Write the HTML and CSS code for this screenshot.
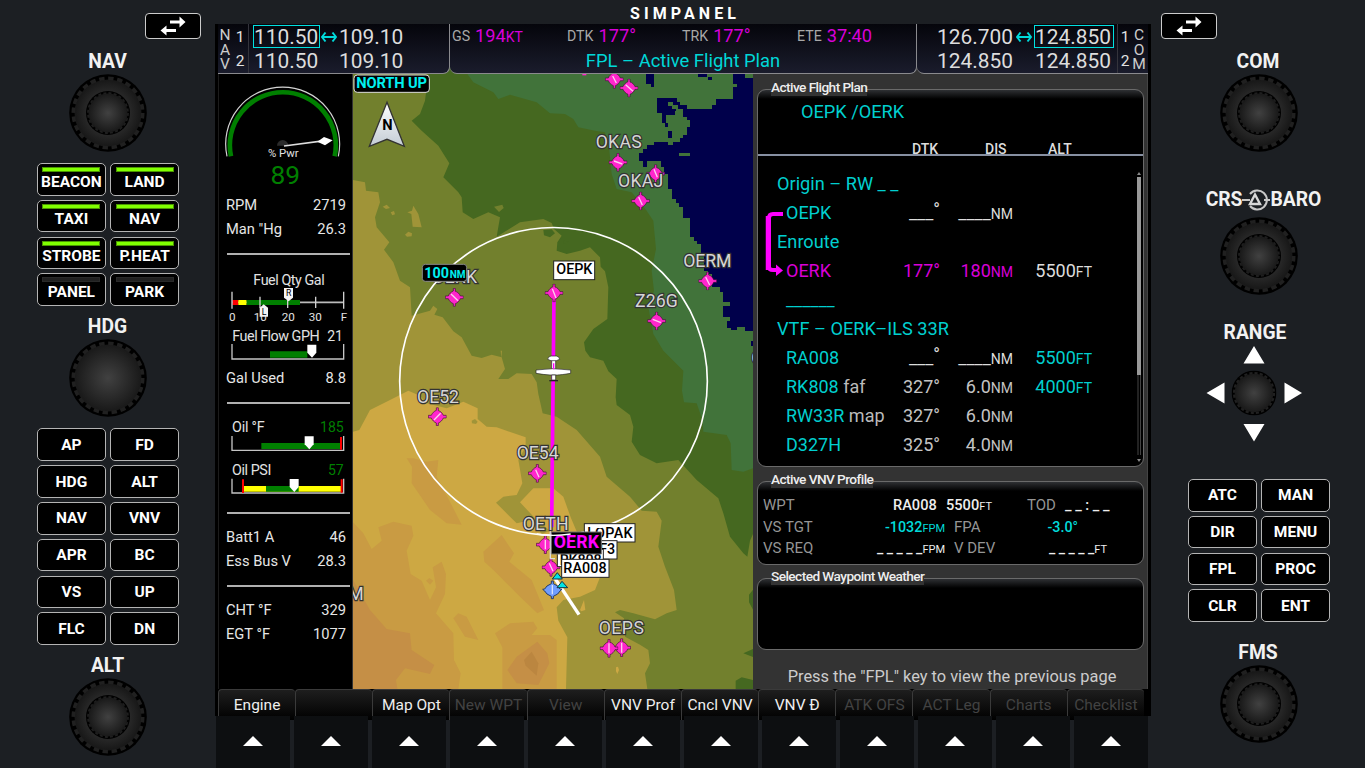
FILE: index.html
```html
<!DOCTYPE html>
<html lang="en">
<head>
<meta charset="utf-8">
<title>SimPanel</title>
<link rel="stylesheet" href="styles.css">
</head>
<body>
<svg class="defs" width="0" height="0" aria-hidden="true">
  <defs>
    <radialGradient id="cap"><stop offset="0" stop-color="#414141"/><stop offset="1" stop-color="#191919"/></radialGradient>
    <radialGradient id="ring"><stop offset="0" stop-color="#333"/><stop offset="0.6" stop-color="#2a2a2a"/><stop offset="1" stop-color="#171717"/></radialGradient>
    <linearGradient id="silver" x1="0" y1="0" x2="0" y2="1"><stop offset="0" stop-color="#fff"/><stop offset="1" stop-color="#c3ccd4"/></linearGradient>
    <symbol id="knob-single" viewBox="0 0 78 78">
      <circle cx="39" cy="39" r="38.8" fill="#000"/>
      <circle cx="39" cy="39" r="33.5" fill="url(#cap)"/>
      <circle cx="39" cy="39" r="34.7" fill="none" stroke="#202020" stroke-width="3.6" stroke-dasharray="5.4 3.68"/>
    </symbol>
    <symbol id="knob-dual" viewBox="0 0 78 78">
      <circle cx="39" cy="39" r="38.8" fill="#000"/>
      <circle cx="39" cy="39" r="33.5" fill="url(#ring)"/>
      <circle cx="39" cy="39" r="34.7" fill="none" stroke="#202020" stroke-width="3.6" stroke-dasharray="5.4 3.68"/>
      <circle cx="39" cy="39" r="22" fill="#000"/>
      <circle cx="39" cy="39" r="19.5" fill="url(#cap)"/>
      <circle cx="39" cy="39" r="20" fill="none" stroke="#1e1e1e" stroke-width="1.8" stroke-dasharray="3 2.23"/>
    </symbol>
    <symbol id="swap" viewBox="0 0 26 20">
      <path d="M10 4.500h9.500V0.500l6 5.500-6 5.500V7.500H10z M16 13H6.500V9.500l-6 5 6 5V16H16z" fill="#fff"/>
    </symbol>
    <symbol id="apt" viewBox="-28 -28 56 56">
      <path d="M-3-27h6v9C9-17 16-10 18-4h9v8h-9C16 10 9 17 3 19v8h-6v-8C-9 17-16 10-18 4h-9v-8h9C-16-10-9-17-3-19z" fill="#ff26cc" stroke="#3c1434" stroke-width="2"/>
    </symbol>
  </defs>
</svg>

<aside class="bezel">
  <button class="swap swap-left"><svg width="26" height="20"><use href="#swap"/></svg></button>
  <div class="label l-nav">NAV</div>
  <svg class="knob"><use href="#knob-dual"/></svg>
  <div class="keys">
    <button class="key lit"><i class="led on"></i>BEACON</button><button class="key lit"><i class="led on"></i>LAND</button>
    <button class="key lit"><i class="led on"></i>TAXI</button><button class="key lit"><i class="led on"></i>NAV</button>
    <button class="key lit"><i class="led on"></i>STROBE</button><button class="key lit"><i class="led on"></i>P.HEAT</button>
    <button class="key lit"><i class="led"></i>PANEL</button><button class="key lit"><i class="led"></i>PARK</button>
  </div>
  <div class="label l-hdg">HDG</div>
  <svg class="knob"><use href="#knob-single"/></svg>
  <div class="keys ap-keys">
    <button class="key">AP</button><button class="key">FD</button>
    <button class="key">HDG</button><button class="key">ALT</button>
    <button class="key">NAV</button><button class="key">VNV</button>
    <button class="key">APR</button><button class="key">BC</button>
    <button class="key">VS</button><button class="key">UP</button>
    <button class="key">FLC</button><button class="key">DN</button>
  </div>
  <div class="label l-hdg">ALT</div>
  <svg class="knob"><use href="#knob-dual"/></svg>
</aside>

<main class="center">
  <h1 class="brand">SIMPANEL</h1>
  <section class="screen">
    <header class="top">
      <div class="bay nav-bay">
        <div class="vert"><span>N</span><span>A</span><span>V</span></div>
        <div class="nums"><span>1</span><span>2</span></div>
        <div class="freqs">
          <span class="boxed">110.50</span><svg class="dbl" viewBox="0 0 16 12"><path d="M4.500 1.500 1 6l3.500 4.500M11.500 1.500 15 6l-3.500 4.500M1 6h14" /></svg><span>109.10</span>
          <span>110.50</span><i></i><span>109.10</span>
        </div>
      </div>
      <div class="bay mid-bay">
        <div class="data">
          <div><small>GS</small><b>194<sub>KT</sub></b></div>
          <div><small>DTK</small><b>177°</b></div>
          <div><small>TRK</small><b>177°</b></div>
          <div><small>ETE</small><b>37:40</b></div>
        </div>
        <div class="page">FPL – Active Flight Plan</div>
      </div>
      <div class="bay com-bay">
        <div class="freqs">
          <span>126.700</span><svg class="dbl" viewBox="0 0 16 12"><path d="M4.500 1.500 1 6l3.500 4.500M11.500 1.500 15 6l-3.500 4.500M1 6h14" /></svg><span class="boxed">124.850</span>
          <span>124.850</span><i></i><span>124.850</span>
        </div>
        <div class="nums"><span>1</span><span>2</span></div>
        <div class="vert"><span>C</span><span>O</span><span>M</span></div>
      </div>
    </header>

    <div class="work">
      <section class="eis">
        <svg class="g-pwr" viewBox="9 0 405 357">
          <path d="M36 247A171 171 0 1 1 370 247" fill="none" stroke="#d4d4d4" stroke-width="3.500"/>
          <path d="M48 247A159 159 0 1 1 359 247" fill="none" stroke="#007f00" stroke-width="14"/>
          <path d="M186 215a17 17 0 0 1 34 0z" fill="#2b2b2b"/>
          <path d="M207 216 330 200" stroke="#ddd" stroke-width="5"/>
          <path d="M307 203 327 189 353 199 330 214z" fill="#fff"/>
          <text x="205" y="250" class="t" font-size="34" text-anchor="middle">% Pwr</text>
          <text x="211" y="331" class="g" font-size="79" text-anchor="middle">89</text>
        </svg>
        <div class="row"><span>RPM</span><span>2719</span></div>
        <div class="row"><span>Man "Hg</span><span>26.3</span></div>
        <hr class="a">
        <svg class="g-fuel" viewBox="9 543 405 333">
          <text x="222" y="632" class="t" font-size="43" text-anchor="middle" textLength="214">Fuel Qty Gal</text>
          <path d="M52 685H386" stroke="#bbb" stroke-width="5"/>
          <path d="M52 678h18v15H52z" fill="#f00"/><path d="M70 678h25v15H70z" fill="#ff0"/><path d="M95 678h160v15H95z" fill="#007f00"/>
          <path d="M51 653v51M135 668v34M218 668v34M302 668v34M386 653v51" stroke="#d0d0d0" stroke-width="4"/>
          <g class="t" font-size="35" text-anchor="middle"><text x="52" y="740">0</text><text x="136" y="740">10</text><text x="220" y="740">20</text><text x="301" y="740">30</text><text x="387" y="740">F</text></g>
          <path d="M207 642h27v29l-13 11-14-11z" fill="#f4f4f4"/><text x="221" y="667" font-size="26" text-anchor="middle" class="k">R</text>
          <path d="M134 728v-27l12-10 13 10v27z" fill="#f4f4f4"/><text x="147" y="724" font-size="26" text-anchor="middle" class="k">L</text>
          <text x="52" y="801" class="t" font-size="43" textLength="262">Fuel Flow GPH</text><text x="384" y="801" class="t" font-size="42" text-anchor="end">21</text>
          <path d="M165 832h112v19H165z" fill="#007f00"/>
          <path d="M51 810v45H386v-45" fill="none" stroke="#c4c4c4" stroke-width="4"/>
          <path d="M277 812h27v24l-13 15-14-15z" fill="#fff"/>
        </svg>
        <div class="row"><span>Gal Used</span><span>8.8</span></div>
        <hr class="a">
        <svg class="g-oil" viewBox="9 72 405 324">
          <text x="51" y="157" class="t" font-size="43" textLength="98">Oil °F</text><text x="386" y="157" class="g" font-size="42" text-anchor="end">185</text>
          <path d="M139 189h238v18H139z" fill="#007f00"/>
          <path d="M51 168v43H386v-43" fill="none" stroke="#c4c4c4" stroke-width="4"/><path d="M378 171v38" stroke="#f00" stroke-width="6"/>
          <path d="M269 169h27v24l-13 15-14-15z" fill="#fff"/>
          <text x="51" y="285" class="t" font-size="43" textLength="118">Oil PSI</text><text x="386" y="285" class="g" font-size="42" text-anchor="end">57</text>
          <path d="M84 318h294v17H84z" fill="#ff0"/><path d="M153 318h98v17h-98z" fill="#007f00"/>
          <path d="M51 296v43H386v-43" fill="none" stroke="#c4c4c4" stroke-width="4"/><path d="M84 298v41M380 298v40" stroke="#f00" stroke-width="6"/>
          <path d="M224 297h27v24l-13 15-14-15z" fill="#fff"/>
        </svg>
        <hr>
        <div class="row first"><span>Batt1 A</span><span>46</span></div>
        <div class="row"><span>Ess Bus V</span><span>28.3</span></div>
        <hr class="a">
        <div class="row first"><span>CHT °F</span><span>329</span></div>
        <div class="row"><span>EGT °F</span><span>1077</span></div>
      </section>

      <svg class="map" viewBox="9 0 1200 1845">
        <path class="low" d="M9 0H1209V1845H9z"/>
        <path class="sea" shape-rendering="crispEdges" d="M1185 0V12H1209V770H1185V760H1162V768H1142V762H1130V740H1140V730H1120V695H1140V685H1120V655H1110V640H1085V600H1075V590H1062V545H1052V510H1042V500H1032V488H1020V432H1000V400H988V388H978V376H965V345H955V300H942V280H932V262H890V278H880V262H868V236H880V226H890V214H912V203H955V213H968V203H990V193H1000V183H1010V158H1020V138H1010V128H1000V118H988V112H975V122H948V148H955V158H945V148H935V118H922V72H980V84H990V94H1010V104H1085V94H1098V74H1150V40H1162V30H1150V0z"/>
        <path class="sea" shape-rendering="crispEdges" d="M955 170h12v22h-12zM1045 0h25v8h16v10h-12v-8h-29zM1203 802h6v14h-6zM888 0h24v40h-10v-10h-14z"/>
        <path class="low" shape-rendering="crispEdges" d="M988 236h32v10h-32zM955 84h14v10h16v10h14v12h-20v-10h-12v-10h-12z"/>
        <path class="dark" d="M352 0 370 25 430 55 445 75 480 62 560 85 600 118 645 120 670 135 685 160 735 170 765 175 778 230 785 300 800 345 845 355 890 410 910 440 918 525 905 590 912 650 895 700 910 780 940 830 1000 890 996 950 1002 985 1040 988 1058 1040 1060 1073 1130 1083 1142 1108 1145 1188 1180 1193 1209 1183V1845H9V0z"/>
        <path class="olive" d="M235 0 225 80 210 120 185 140 215 170 265 215 298 268 280 310 325 355 335 370 338 415 370 435 415 415 450 430 440 488 510 445 580 435 605 447 612 465 635 485 622 505 620 530 650 540 690 530 720 520 750 550 752 578 765 592 775 640 772 735 730 765 702 805 706 830 720 850 760 860 775 892 800 915 797 970 800 993 840 1023 850 1058 845 1103 870 1143 920 1168 985 1158 1040 1218 1105 1273 1120 1318 1140 1388 1180 1438 1192 1448 1200 1400 1209 1380V1845H9V0z"/>
        <path class="dark" d="M580 468l25-2 10 12-15 12-18-6zM640 500l15 2-6 9-10-5zM1197 1562l12-15v60l-12-22zM1180 1738l29-13v24zM1157 1820l18-10 34 8v27h-52z"/>
        <path class="olive" d="M432 398l25-6 4 10-14 12z"/>
        <path class="tan" d="M9 318 45 325 48 350 85 355 90 385 75 430 80 460 118 505 102 527 130 565 150 620 180 640 185 725 240 710 250 695 262 705 253 722 278 730 310 772 335 790 365 845 395 852 425 842 455 850 465 885 445 915 475 915 500 898 545 900 560 925 565 960 578 1018 620 1028 680 1068 750 1148 770 1208 840 1268 875 1310 920 1313 935 1340 925 1418 945 1478 972 1548 980 1608 950 1618 915 1636 850 1618 810 1608 795 1615 822 1633 825 1688 870 1712 895 1728 900 1768 885 1798 892 1845H9z"/>
        <path class="tan" d="M190 395 205 420 215 460 188 458 184 420 172 415 186 410zM165 482l10-9 11 5-1 9-14 1zM98 398l12-6 10 10-12 3zM122 415l10-4 3 10-8 3zM452 830l4 0-2 22z"/>
        <path class="gold" d="M9 1073 28 1068 60 1008 120 978 175 950 210 965 230 988 290 1003 340 983 383 1003 383 1035 410 1058 440 1060 527 1090 527 1118 505 1158 517 1228 500 1263 460 1268 438 1286 480 1328 500 1348 545 1338 575 1380 600 1370 560 1338 510 1285 550 1243 610 1243 640 1268 662 1330 700 1420 745 1478 750 1510 735 1548 690 1568 640 1578 620 1600 625 1640 652 1690 648 1845H9z"/>
        <path class="tan" d="M365 1040l10-5 8 8-5 7-12-2z"/>
        <path class="gold" d="M798 1780l6-2 3 10-5 12-4-8zM690 1608l12-30 4 30-12 4z"/>
        <path class="amber" d="M170 1153 190 1153 230 1163 265 1158 260 1208 292 1268 335 1352 290 1348 240 1308 185 1228 186 1178zM9 1345 40 1378 65 1425 95 1400 85 1360 130 1343 185 1355 190 1385 170 1430 182 1500 215 1520 240 1578 258 1540 248 1480 275 1463 288 1500 285 1560 258 1618 310 1678 312 1758 332 1798 325 1845H9zM400 1433 455 1383 492 1438 478 1463 545 1518 582 1608 562 1618 520 1578 460 1518 430 1488 403 1463zM325 1618 350 1628 385 1698 345 1688 310 1633zM435 1678 480 1648 550 1643 562 1663 545 1683 600 1683 620 1698V1845H457V1720zM228 1520l10-8 12 8-10 12z"/>
        <path class="brown" d="M9 1518 60 1608 110 1665 180 1678 185 1728 253 1773 240 1800 165 1783 138 1818 142 1845H9zM472 1788 500 1748 562 1703 592 1738 598 1768 565 1833 500 1828z"/>
        <path class="core" d="M522 1758 545 1733 565 1768 560 1805 527 1775z"/>

        <path d="M612 658 605 1360" stroke="#f0f" stroke-width="11" fill="none"/>
        <path d="M613 1510 687 1622" stroke="#fff" stroke-width="10"/>
        <g>
          <use href="#apt" x="765" y="-12" width="56" height="56"/><use href="#apt" x="809" y="14" width="56" height="56"/>
          <use href="#apt" x="776" y="237" width="56" height="56"/><use href="#apt" x="889" y="271" width="56" height="56"/>
          <use href="#apt" x="844" y="353" width="56" height="56"/><use href="#apt" x="1045" y="593" width="56" height="56"/>
          <use href="#apt" x="892" y="713" width="56" height="56"/><use href="#apt" x="285" y="642" width="56" height="56"/>
          <use href="#apt" x="584" y="629" width="56" height="56"/><use href="#apt" x="234" y="1000" width="56" height="56"/>
          <use href="#apt" x="534" y="1170" width="56" height="56"/><use href="#apt" x="558" y="1384" width="56" height="56"/>
          <use href="#apt" x="575" y="1452" width="56" height="56"/><use href="#apt" x="787" y="1693" width="56" height="56"/><use href="#apt" x="749" y="1695" width="56" height="56"/>
          <path d="M697 0h12v4h-12z" fill="#ff26cc"/>
          <path d="M788 6 799 27M827 32 849 52M792 261 817 270M912 286 922 310M866 369 877 393M1067 609 1079 633M908 736 933 746M303 660 324 680M607 644 618 672M252 1038 272 1018M557 1187 567 1210M586 1398V1426M598 1468 609 1492M815 1706V1736M777 1708V1738" stroke="#fbd0ee" stroke-width="4"/>
        </g>
        <g class="place">
          <text x="806" y="222" textLength="138">OKAS</text><text x="872" y="339" textLength="136">OKAJ</text>
          <text x="1072" y="579" textLength="144">OERM</text><text x="919" y="700" textLength="128">Z26G</text>
          <text x="314" y="628" textLength="134">OERK</text><text x="264" y="988" textLength="126">OE52</text>
          <text x="563" y="1156" textLength="126">OE54</text><text x="587" y="1369" textLength="138">OETH</text>
          <text x="814" y="1680" textLength="136">OEPS</text><text x="18" y="1579">M</text><text x="1222" y="869">O</text>
        </g>
        <circle cx="610.500" cy="922" r="461.500" fill="none" stroke="#fff" stroke-width="5"/>
        <path d="M604 1521h6v8q16 6 20 16l6 1-6 5q-4 10-20 16v7h-6v-7q-16-6-20-16l-6-5 6-1q4-10 20-16z" fill="#6f9dff" stroke="#263c66" stroke-width="3"/><path d="M607 1533v28" stroke="#d5e2ff" stroke-width="4"/>
        <path d="M607 1515 622 1496 637 1515zM621 1541 636 1522 653 1541z" fill="#00e4e4" stroke="#134" stroke-width="3"/>

        <g class="tag">
          <rect x="703" y="1349" width="152" height="55"/><text x="780" y="1391" textLength="136">LOPAK</text>
          <path d="M735 1362 748 1352 760 1362z" fill="#fff"/>
          <rect x="640" y="1400" width="161" height="55"/><text x="757" y="1440">OF3</text>
          <rect x="622" y="1426" width="138" height="52"/><text x="692" y="1473" textLength="126">RK808</text>
          <rect x="635" y="1456" width="142" height="54"/><text x="705" y="1496" textLength="130">RA008</text>
          <rect x="611" y="561" width="123" height="56"/><text x="673" y="601" textLength="108">OEPK</text>
        </g>
        <path d="M601 1372v82h14" fill="none" stroke="#ddd" stroke-width="4"/>
        <path d="M604 1374h150v66H604z" fill="#000" stroke="#777" stroke-width="3"/>
        <text x="679" y="1423" class="active" text-anchor="middle" textLength="136">OERK</text>
        <path d="M560 1380Q610 1388 662 1380" fill="none" stroke="#fff" stroke-width="4"/>

        <g fill="#fff" stroke="#222" stroke-width="2"><path d="M605 856h12v34h-12z"/><path d="M593 856q0-8 10-10h16q10 2 10 10l-10 4h-16z"/><path d="M558 888q50-8 104 0v10q-30 5-40 5h-22q-20-1-42-5z"/><path d="M605 903h12v15h-12z"/></g>
        <path d="M611 868v18" stroke="#f0f" stroke-width="4"/><path d="M598 920h26" stroke="#222" stroke-width="4"/>

        <rect x="12" y="3" width="226" height="52" rx="10" fill="#000" stroke="#ddd" stroke-width="3"/>
        <text x="125" y="43" class="cy" font-size="44" text-anchor="middle" textLength="212">NORTH UP</text>
        <path d="M111 85 163 217 111 196 58 217z" fill="url(#silver)" stroke="#333" stroke-width="4"/>
        <text x="112" y="168" class="k n" font-size="44" text-anchor="middle">N</text>
        <rect x="217" y="571" width="133" height="51" rx="9" fill="#000" stroke="#888" stroke-width="3"/>
        <text x="223" y="612" class="cy" font-size="43">100<tspan font-size="30" dx="2">NM</tspan></text>
      </svg>

      <section class="side">
        <div class="panel plan">
          <h2>Active Flight Plan</h2>
          <div class="route">OEPK /OERK</div>
          <div class="cols"><span>DTK</span><span>DIS</span><span>ALT</span></div>
          <div class="legs">
            <div class="leg head">Origin – RW _ _</div>
            <div class="leg"><span>OEPK</span><em class="w">___<sup>°</sup></em><em class="w">____<small>NM</small></em><em></em></div>
            <div class="leg head">Enroute</div>
            <div class="leg mag"><span>OERK</span><em>177°</em><em>180<small>NM</small></em><em class="w">5500<small>FT</small></em></div>
            <div class="leg"><span>______</span></div>
            <div class="leg head">VTF – OERK–ILS 33R</div>
            <div class="leg"><span>RA008</span><em class="w">___<sup>°</sup></em><em class="w">____<small>NM</small></em><em class="c">5500<small>FT</small></em></div>
            <div class="leg"><span>RK808 <i>faf</i></span><em>327°</em><em>6.0<small>NM</small></em><em class="c">4000<small>FT</small></em></div>
            <div class="leg"><span>RW33R <i>map</i></span><em>327°</em><em>6.0<small>NM</small></em><em></em></div>
            <div class="leg"><span>D327H</span><em>325°</em><em>4.0<small>NM</small></em><em></em></div>
            <svg class="legline" viewBox="0 0 20 68"><path d="M19 5H9Q5 5 5 9V58Q5 61 9 61H13" fill="none" stroke="#f0f" stroke-width="4"/><path d="M4 7V61" stroke="#f0f" stroke-width="4.500"/><path d="M12 55.500 19 61.500 12 67z" fill="#f0f"/></svg>
            <svg class="scroll" viewBox="0 0 6 292"><path d="M1 4 3 1l2 3zM1 288l2 3 2-3z" fill="#888"/><path d="M2 204v80M4.500 204v80" stroke="#444"/><path d="M3 6v198" stroke="#999" stroke-width="4"/></svg>
          </div>
        </div>
        <div class="panel vnv">
          <h2>Active VNV Profile</h2>
          <div class="vrow r1"><span>WPT</span><b>RA008</b><b>5500<small>FT</small></b><span>TOD</span><b class="dash">_ _ : _ _</b></div>
          <div class="vrow r2"><span>VS TGT</span><b class="c">-1032<small>FPM</small></b><span>FPA</span><b class="c">-3.0°</b></div>
          <div class="vrow r3"><span>VS REQ</span><b><u>_ _ _ _ _</u><small>FPM</small></b><span>V DEV</span><b><u>_ _ _ _ _</u><small>FT</small></b></div>
        </div>
        <div class="panel wx"><h2>Selected Waypoint Weather</h2></div>
        <p class="hint">Press the "FPL" key to view the previous page</p>
      </section>
    </div>

    <footer class="soft">
      <span>Engine</span><span></span><span>Map Opt</span><span class="off">New WPT</span><span class="off">View</span><span>VNV Prof</span><span>Cncl VNV</span><span>VNV Đ</span><span class="off">ATK OFS</span><span class="off">ACT Leg</span><span class="off">Charts</span><span class="off">Checklist</span>
    </footer>
  </section>
  <nav class="bez"><button></button><button></button><button></button><button></button><button></button><button></button><button></button><button></button><button></button><button></button><button></button><button></button></nav>
</main>

<aside class="bezel right">
  <button class="swap swap-right"><svg width="26" height="20"><use href="#swap"/></svg></button>
  <div class="label l-nav">COM</div>
  <svg class="knob"><use href="#knob-dual"/></svg>
  <div class="label l-crs">CRS<svg width="28" height="24" viewBox="0 0 28 24"><path d="M0 12h8M22 12h6M8 6A9.500 9.500 0 1 1 8 18" fill="none" stroke="#c8c8c8" stroke-width="2"/><path d="M13 6.500 18 16H8z" fill="none" stroke="#d8d8d8" stroke-width="2.400"/></svg>BARO</div>
  <svg class="knob k-crs"><use href="#knob-dual"/></svg>
  <div class="label l-range">RANGE</div>
  <svg class="pad" viewBox="0 0 96 96"><path d="M48 0 58.500 17.500H37.500zM48 95.500 58.500 78H37.500zM0.500 47 18.500 36.500V57.500zM96 47 78.500 36.500V57.500z" fill="#fff"/><use href="#knob-single" x="25.500" y="24.500" width="45" height="45"/></svg>
  <div class="keys">
    <button class="key">ATC</button><button class="key">MAN</button>
    <button class="key">DIR</button><button class="key">MENU</button>
    <button class="key">FPL</button><button class="key">PROC</button>
    <button class="key">CLR</button><button class="key">ENT</button>
  </div>
  <div class="label l-fms">FMS</div>
  <svg class="knob"><use href="#knob-dual"/></svg>
</aside>
</body>
</html>
```

FILE: styles.css
```css
* { box-sizing: border-box; }
body { margin: 0; width: 1365px; height: 768px; overflow: hidden; display: flex; background: #1c1f23; color: #fff; font-family: Roboto, sans-serif; }
button { font-family: inherit; color: inherit; padding: 0; }
.defs { position: absolute; }

/* side bezels */
.bezel { width: 215px; display: flex; flex-direction: column; align-items: center; }
.bezel.right { width: 214px; }
.swap { width: 56px; height: 26px; margin-top: 13px; background: #000; border: 1px solid #ccc; border-radius: 4px; display: flex; align-items: center; justify-content: center; flex: none; }
.swap-left { margin-left: 131px; }
.swap-right { margin-right: 138px; }
.label { height: 24px; padding-top: 2px; line-height: 22px; font-size: 19.300px; font-weight: 700; color: #f2f2f2; display: flex; align-items: center; flex: none; }
.l-nav { margin-top: 10px; }
.l-hdg { margin-top: 8px; }
.l-crs { margin-top: 35px; margin-left: 11px; }
.l-range { margin-top: 25px; margin-right: 6px; }
.l-fms { margin-top: 18px; }
.knob { width: 78px; height: 78px; margin-top: 1px; margin-left: 1px; flex: none; }
.right .knob { margin-left: 2px; }
.k-crs { margin-top: 6px; }
.pad { width: 96px; height: 96px; margin: 2px 8px 0 0; flex: none; }
.keys { display: grid; grid-template-columns: 69px 69px; grid-auto-rows: 32.600px; gap: 4.200px; margin-top: 11px; margin-left: 1px; }
.ap-keys { margin-top: 11.500px; }
.right .keys { margin-top: 37px; margin-left: 2px; }
.key { display: flex; flex-direction: column; align-items: center; justify-content: center; background: #000; border: 1.5px solid #b4b4b4; border-radius: 5px; font-size: 15.500px; font-weight: 700; line-height: 18px; }
.lit { justify-content: flex-start; padding-top: 3px; }
.led { width: 58px; height: 5px; margin-bottom: 1px; background: #202020; border: 1px solid #292929; flex: none; }
.led.on { background: #80ff00; border-color: #4b9600; }

/* display unit */
.center { width: 936px; display: flex; flex-direction: column; }
.brand { height: 24px; margin: 0; padding: 2px 0 0 4px; line-height: 23px; font-size: 16px; font-weight: 700; letter-spacing: 4.100px; text-align: center; }
.screen { height: 692px; padding: 0 3px; background: #000; display: flex; flex-direction: column; }
.top { height: 50px; display: flex; background: linear-gradient(to right, #456820 50%, #333 50%); flex: none; }
.bay { border: 1px solid #8a8a8e; border-width: 0 1px 1px 0; background: linear-gradient(#05050b, #1a1c2c); color: #e2e2e2; }
.nav-bay { width: 232px; border-bottom-right-radius: 7px; display: flex; }
.mid-bay { width: 467px; border-radius: 0 0 7px 7px; }
.com-bay { width: 231px; border-width: 0 0 1px; border-bottom-left-radius: 7px; display: flex; }
.vert { width: 14px; padding-top: 4px; display: flex; flex-direction: column; text-align: center; font-size: 15.500px; line-height: 14.600px; color: #ccc; }
.nums { width: 15px; padding-top: 1px; display: flex; flex-direction: column; text-align: center; font-size: 15.500px; line-height: 24px; border-right: 1.5px solid #34343c; }
.nav-bay .nums { width: 17px; }
.freqs { display: grid; align-content: start; padding-top: 1px; grid-auto-rows: 23.500px; line-height: 22px; font-size: 20.900px; color: #ddd; align-items: start; white-space: nowrap; }
.freqs span { padding: 0; height: 23px; border: 1px solid transparent; }
.nav-bay .freqs { grid-template-columns: 67px 18px 68px; margin-left: 4px; }
.com-bay .freqs { grid-template-columns: 78px 20px 80px; margin-left: 19px; width: 180px; }
.freqs .boxed { border: 1px solid #00e0e0; }
.dbl { width: 16px; height: 12px; margin: 6px 1px 0; fill: none; stroke: #00dada; stroke-width: 2; }
.com-bay .dbl { margin-left: 2px; }
.com-bay .nums { border-left: 1.5px solid #34343c; border-right: 0; margin-left: 1px; width: 15px; }
.com-bay .vert { width: 14px; }
.data { height: 23px; display: grid; grid-template-columns: 115px 115px 115px 1fr; padding-left: 2px; line-height: 23px; }
.data div { display: flex; }
.data small { font-size: 14.200px; color: #a8a8a8; padding-top: 1px; margin-right: 5px; }
.data b { font-size: 18.200px; font-weight: 400; color: #d800d8; }
.data sub { font-size: 14px; vertical-align: baseline; }
.page { text-align: center; font-size: 18.400px; line-height: 28px; color: #00d8d8; }
.work { height: 615px; display: flex; flex: none; }

/* engine strip */
.eis { width: 135px; border-right: 1px solid #333; border-left: 1px solid #1c1c1c; background: #000; display: flex; flex-direction: column; }
.eis svg { width: 135px; margin-left: -1px; flex: none; }
.g-pwr { height: 119px; }
.g-fuel { height: 111px; }
.g-oil { height: 108px; }
.row { height: 24px; line-height: 25px; padding: 0 6px 0 7px; display: flex; justify-content: space-between; font-size: 14.700px; color: #e6e6e6; flex: none; }
.row.first { margin-top: 11px; }
.eis hr { width: 123px; height: 2px; margin: 0 0 0 8px; border: 0; background: #b0b0b0; flex: none; }
.eis hr.a { margin-top: 12px; }
.t { fill: #e2e2e2; }
.g { fill: #007f00; }
.k { fill: #000; }
.n { font-weight: 700; }
svg text { font-family: Roboto, sans-serif; }

/* moving map */
.map { width: 400px; height: 615px; flex: none; }
.low { fill: #41733a; }
.sea { fill: #00004b; }
.dark { fill: #456820; }
.olive { fill: #72802d; }
.tan { fill: #a09438; }
.gold { fill: #cda843; }
.amber { fill: #c99b43; }
.brown { fill: #c58f46; }
.core { fill: #bb8640; }
.place text { font-size: 53px; fill: #d6d6d6; stroke: #333; stroke-width: 7px; paint-order: stroke; text-anchor: middle; }
.tag rect { fill: #fff; stroke: #222; stroke-width: 3px; }
.tag text { font-size: 43px; font-weight: 500; fill: #000; text-anchor: middle; }
.active { font-size: 53px; font-weight: 700; fill: #f0f; }
.cy { font-weight: 700; fill: #00f0f0; }

/* flight plan page */
.side { width: 395px; background: #333; border-right: 1px solid #444; padding-left: 4px; display: flex; flex-direction: column; }
.panel { width: 387px; border: 1.5px solid #6a6a6a; border-radius: 9px; background: linear-gradient(#2e3033, #000 9px); flex: none; }
.panel h2 { width: max-content; height: 15px; margin: -9px 0 0 13px; background: #333; font-size: 13.700px; line-height: 13px; font-weight: 500; color: #eee; letter-spacing: -.58px; white-space: nowrap; }
.plan { height: 378px; margin-top: 15px; }
.route { height: 30px; margin-top: 2px; padding-left: 43px; font-size: 18.200px; line-height: 28px; color: #00cfcf; }
.cols { height: 28px; padding: 14px 0 0 154px; display: grid; grid-template-columns: 73px 63px 60px; font-size: 14px; line-height: 14px; font-weight: 500; color: #ddd; border-bottom: 2px solid #8790a2; }
.cols span { margin-bottom: -2px; }
.legs { position: relative; padding-top: 13px; }
.leg { height: 29px; line-height: 29px; padding-left: 28px; display: grid; grid-template-columns: 82px 72px 73px 79px; font-size: 18px; color: #00cfcf; white-space: nowrap; }
.leg.head { padding-left: 19px; display: block; font-size: 18.200px; }
.leg i { font-style: normal; color: #bbb; }
.leg em { font-style: normal; text-align: right; color: #c4c4c4; }
.leg small { font-size: 14px; color: inherit; }
.leg sup { font-size: 18px; line-height: 0; vertical-align: 3px; }
.leg.mag, .leg.mag em { color: #d800d8; }
.leg .w, .leg.mag .w { color: #dcdcdc; }
.leg .c, .c { color: #00cfcf; }
.legline { position: absolute; left: 6px; top: 53px; width: 20px; height: 68px; }
.scroll { position: absolute; right: 1px; top: 15px; width: 6px; height: 292px; }
.vnv { height: 84px; margin-top: 14px; }
.vrow { height: 21.700px; line-height: 21.700px; padding-left: 5px; display: grid; font-size: 15px; color: #959595; white-space: nowrap; }
.r1 { margin-top: 7px; grid-template-columns: 130px 53px 81px 38px 60px; }
.r2, .r3 { grid-template-columns: 100px 82px 64px 1fr; column-gap: 0; }
.vrow b { font-size: 14.600px; font-weight: 500; color: #eee; }
.vrow b.c { font-size: 14.300px; color: #00dada; }
.vrow small { font-size: 11px; font-weight: 400; }
.vrow u { text-decoration: none; font-size: 14px; }
.r2 b, .r3 b { text-align: right; }
.r2 span:nth-child(3), .r3 span:nth-child(3) { padding-left: 9px; }
.r2 b:last-child { padding-right: 65px; }
.r3 b:last-child { padding-right: 36px; }
.wx { height: 72px; margin-top: 13px; }
.hint { margin: 14px 0 0; text-align: center; font-size: 16.400px; line-height: 25px; color: #ccc; }

.soft { width: 926px; height: 27px; display: grid; grid-template-columns: repeat(12, 1fr); flex: none; }
.soft span { border: 1px solid #3a3a3a; border-width: 1px 0 0 1.5px; border-radius: 4px 4px 0 0; background: linear-gradient(#1e1e1e, #000); text-align: center; font-size: 15.500px; line-height: 30px; color: #eee; white-space: nowrap; }
.soft .off { color: #424242; }
.bez { height: 52px; padding-left: 1px; display: grid; grid-template-columns: repeat(12, 74px); column-gap: 4px; }
.bez button { border: 0; padding-bottom: 2px; background: #0d0f11; display: flex; align-items: center; justify-content: center; }
.bez button::before { content: ""; border: 10px solid transparent; border-top: 0; border-bottom-color: #fff; }
```
